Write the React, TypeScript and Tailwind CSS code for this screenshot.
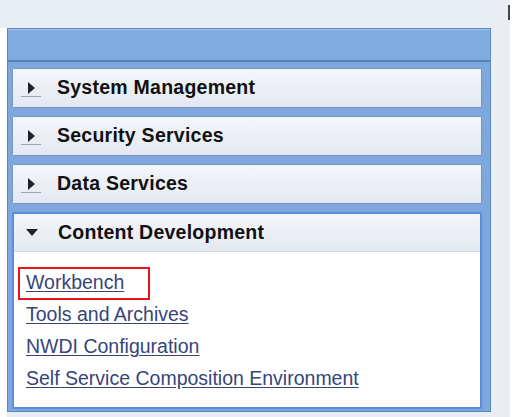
import { ReactNode } from "react";

function Arrow({ open }: { open?: boolean }) {
  return (
    <div className="relative w-[20px] h-[20px] shrink-0 flex items-center justify-center">
      {open ? (
        <svg width="12" height="7" viewBox="0 0 12 7">
          <path d="M0 0 L12 0 L6 7 Z" fill="#1c2230" />
        </svg>
      ) : (
        <>
          <svg width="7" height="12" viewBox="0 0 7 12">
            <path d="M0 0 L7 6 L0 12 Z" fill="#1c2230" />
          </svg>
          <div className="absolute left-0 right-0 bottom-[1px] h-[1px] bg-[#9aa8c0]" />
        </>
      )}
    </div>
  );
}

function Section({ title, open, children }: { title: string; open?: boolean; children?: ReactNode }) {
  return (
    <div
      className={
        open
          ? "border-2 border-[#5a8de0] bg-white rounded-[2px]"
          : "border border-[#7a95bb] rounded-[2px] shadow-[inset_0_1px_0_#ffffff]"
      }
    >
      <div
        className={
          "flex items-center h-[38px] pl-[8px] gap-[16px] bg-gradient-to-b from-[#f3f5f9] to-[#e4e9f1] " +
          (open ? "border-b border-[#d3dbe6]" : "")
        }
      >
        <Arrow open={open} />
        <span className="text-[19.5px] font-bold text-[#111] tracking-[0.25px]">{title}</span>
      </div>
      {children}
    </div>
  );
}

const links = ["Workbench", "Tools and Archives", "NWDI Configuration", "Self Service Composition Environment"];

export default function App() {
  return (
    <div className="w-[519px] h-[417px] bg-white font-['Liberation_Sans',Arial,sans-serif] overflow-hidden">
      <div className="w-[510px] h-[417px] bg-[#e9eef4] flex flex-col">
        <div className="h-[28px] flex justify-end">
          <div className="w-[2px] h-[15px] mt-[5px] bg-[#444]" />
        </div>
        <div className="flex flex-1">
          <div className="w-[7px] bg-white" />
          <div className="w-[484px] h-[384px] bg-[#7ea8dd] border border-[#5b86c0] flex flex-col">
            <div className="h-[33px] bg-[#80abe0] border-t border-t-[#a9c6ec] border-b-2 border-b-[#5680ba]" />
            <div className="flex flex-col gap-[8px] pl-[4px] pr-[8px] pt-[6px]">
              <Section title="System Management" />
              <Section title="Security Services" />
              <Section title="Data Services" />
              <Section title="Content Development" open>
                <div className="flex flex-col pl-[12px] pt-[15px] h-[155px] text-[19.5px] text-[#36457a]">
                  {links.map((l, i) => (
                    <div key={l} className="h-[32px] flex items-center">
                      <span
                        className={
                          i === 0
                            ? "ml-[-8px] px-[6px] h-[33px] w-[132px] flex items-center border-2 border-[#e8141a] underline underline-offset-2"
                            : "underline underline-offset-2"
                        }
                      >
                        {l}
                      </span>
                    </div>
                  ))}
                </div>
              </Section>
            </div>
          </div>
          <div className="w-[19px]" />
        </div>
      </div>
    </div>
  );
}
